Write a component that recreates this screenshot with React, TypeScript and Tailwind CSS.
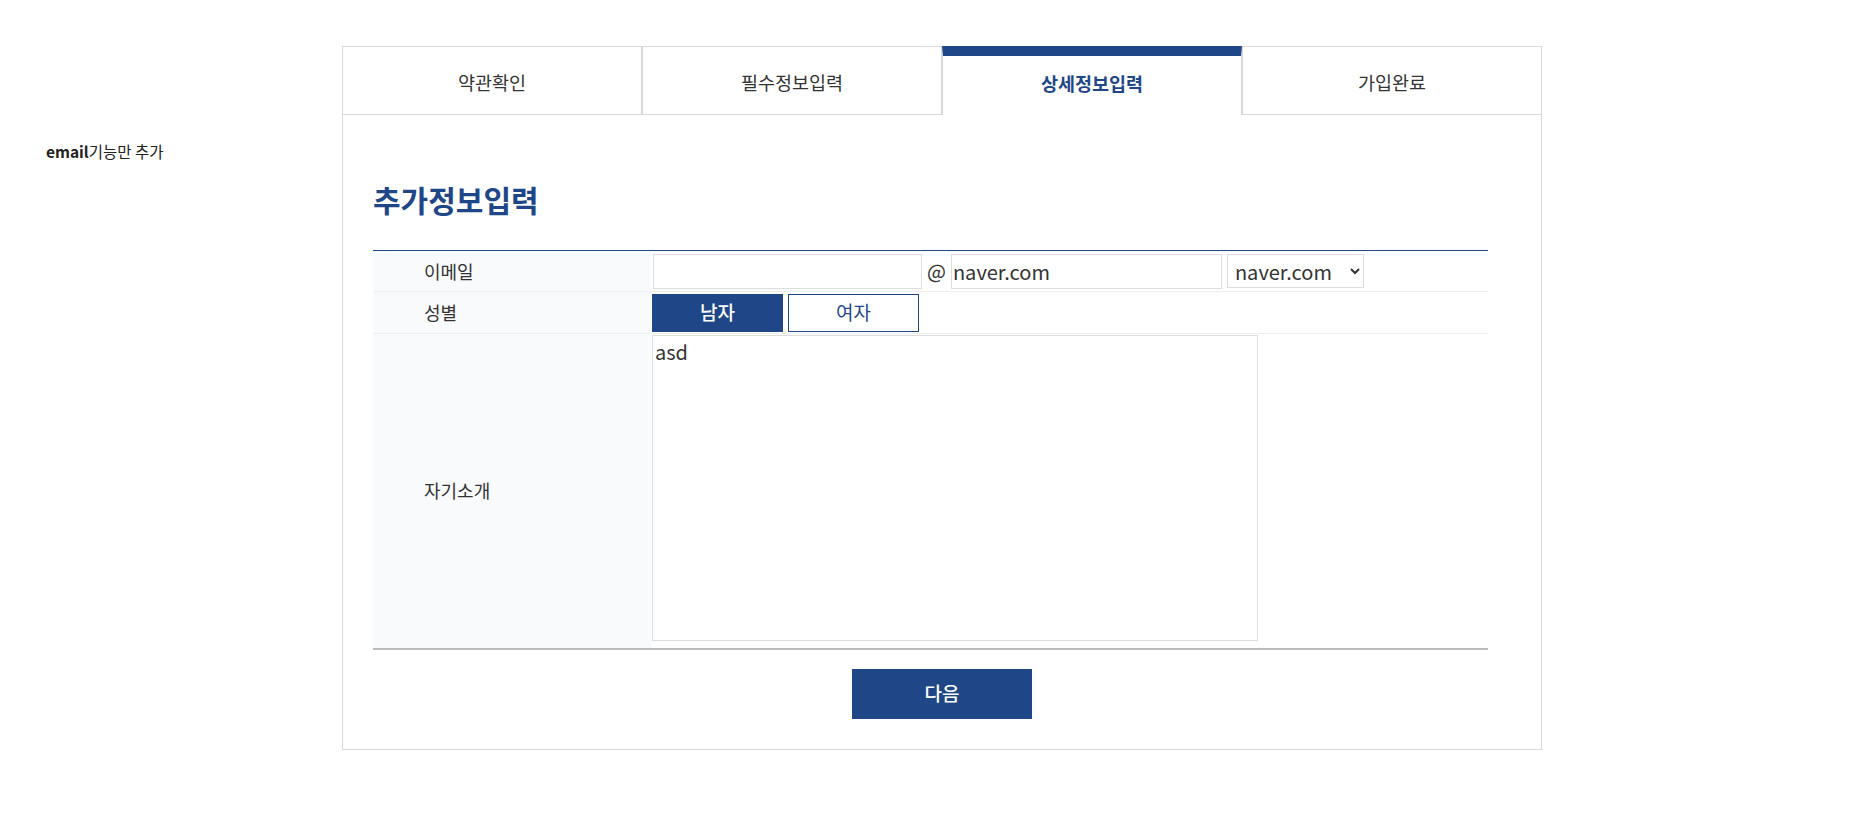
import { useState } from "react";

const tabs = ["약관확인", "필수정보입력", "상세정보입력", "가입완료"];

function App() {
  const [gender, setGender] = useState("남자");
  const [intro, setIntro] = useState("asd");

  return (
    <main className="flex min-h-screen bg-white pt-[46px] font-['Noto_Sans_CJK_KR','Noto_Sans',sans-serif] text-[#333]">
      <div className="w-[342px] shrink-0 pl-[46px] pt-[94px] text-[15.5px] leading-[22px] text-[#222]">
        <b>email</b>기능만 추가
      </div>

      <div className="w-[1200px] shrink-0">
        <ul className="flex">
          {tabs.map((t, i) =>
            i === 2 ? (
              <li
                key={t}
                className="flex h-[69px] w-[300px] items-center justify-center border-x border-t-[10px] border-x-[#d9d9d9] border-t-[#1f4787] pb-[4px] text-[18.5px] font-bold text-[#1f4787]">
                {t}
              </li>
            ) : (
              <li
                key={t}
                className="flex h-[69px] w-[300px] items-center justify-center border border-[#d9d9d9] pt-[5px] text-[18.5px]">
                {t}
              </li>
            )
          )}
        </ul>

        <div className="border-x border-b border-[#d9d9d9] px-[30px] pt-[64px] pb-[30px]">
          <h2 className="text-[30px] font-bold leading-[40px] text-[#1f4787]">
            추가정보입력
          </h2>

          <table className="mt-[31px] w-[1115px] border-collapse border-t border-t-[#1f4787] text-[18px]">
            <tbody>
              <tr className="h-[41px] border-b border-[#eee]">
                <th className="w-[278px] bg-[#f9fafc] pl-[51px] text-left font-normal">
                  이메일
                </th>
                <td className="pl-[2px]">
                  <div className="flex items-center">
                    <input className="h-[35px] w-[269px] border border-[#ddd] px-1 text-[20px] outline-none" />
                    <span className="mx-[5px] text-[20px]">@</span>
                    <input
                      defaultValue="naver.com"
                      className="h-[35px] w-[271px] border border-[#ddd] px-[1px] text-[20px] outline-none"
                    />
                    <select className="ml-[5px] h-[34px] w-[137px] border border-[#ddd] bg-white pl-[3px] text-[20px] outline-none">
                      <option>naver.com</option>
                      <option>gmail.com</option>
                      <option>daum.net</option>
                    </select>
                  </div>
                </td>
              </tr>
              <tr className="h-[42px] border-b border-[#eee]">
                <th className="bg-[#f9fafc] pl-[51px] text-left font-normal">
                  성별
                </th>
                <td className="pl-[1px]">
                  <div className="flex gap-[5px]">
                    {["남자", "여자"].map((g) => (
                      <button
                        key={g}
                        onClick={() => setGender(g)}
                        className={
                          gender === g
                            ? "h-[38px] w-[131px] border border-[#1f4787] bg-[#1f4787] text-[19px] font-medium text-white"
                            : "h-[38px] w-[131px] border border-[#1f4787] bg-white text-[19px] text-[#1f4787]"
                        }>
                        {g}
                      </button>
                    ))}
                  </div>
                </td>
              </tr>
              <tr className="h-[315px] border-b-2 border-[#bbb]">
                <th className="bg-[#f9fafc] pl-[51px] text-left font-normal">
                  자기소개
                </th>
                <td className="pl-[1px] align-top pt-[1px]">
                  <textarea
                    value={intro}
                    onChange={(e) => setIntro(e.target.value)}
                    className="block h-[306px] w-[606px] resize-none border border-[#ddd] px-[2px] py-[2px] text-[20px] leading-[27px] outline-none"
                  />
                </td>
              </tr>
            </tbody>
          </table>

          <div className="mt-[19px] flex justify-center">
            <button className="h-[50px] w-[180px] bg-[#1f4787] text-[19px] font-medium text-white">
              다음
            </button>
          </div>
        </div>
      </div>
    </main>
  );
}

export default App;
